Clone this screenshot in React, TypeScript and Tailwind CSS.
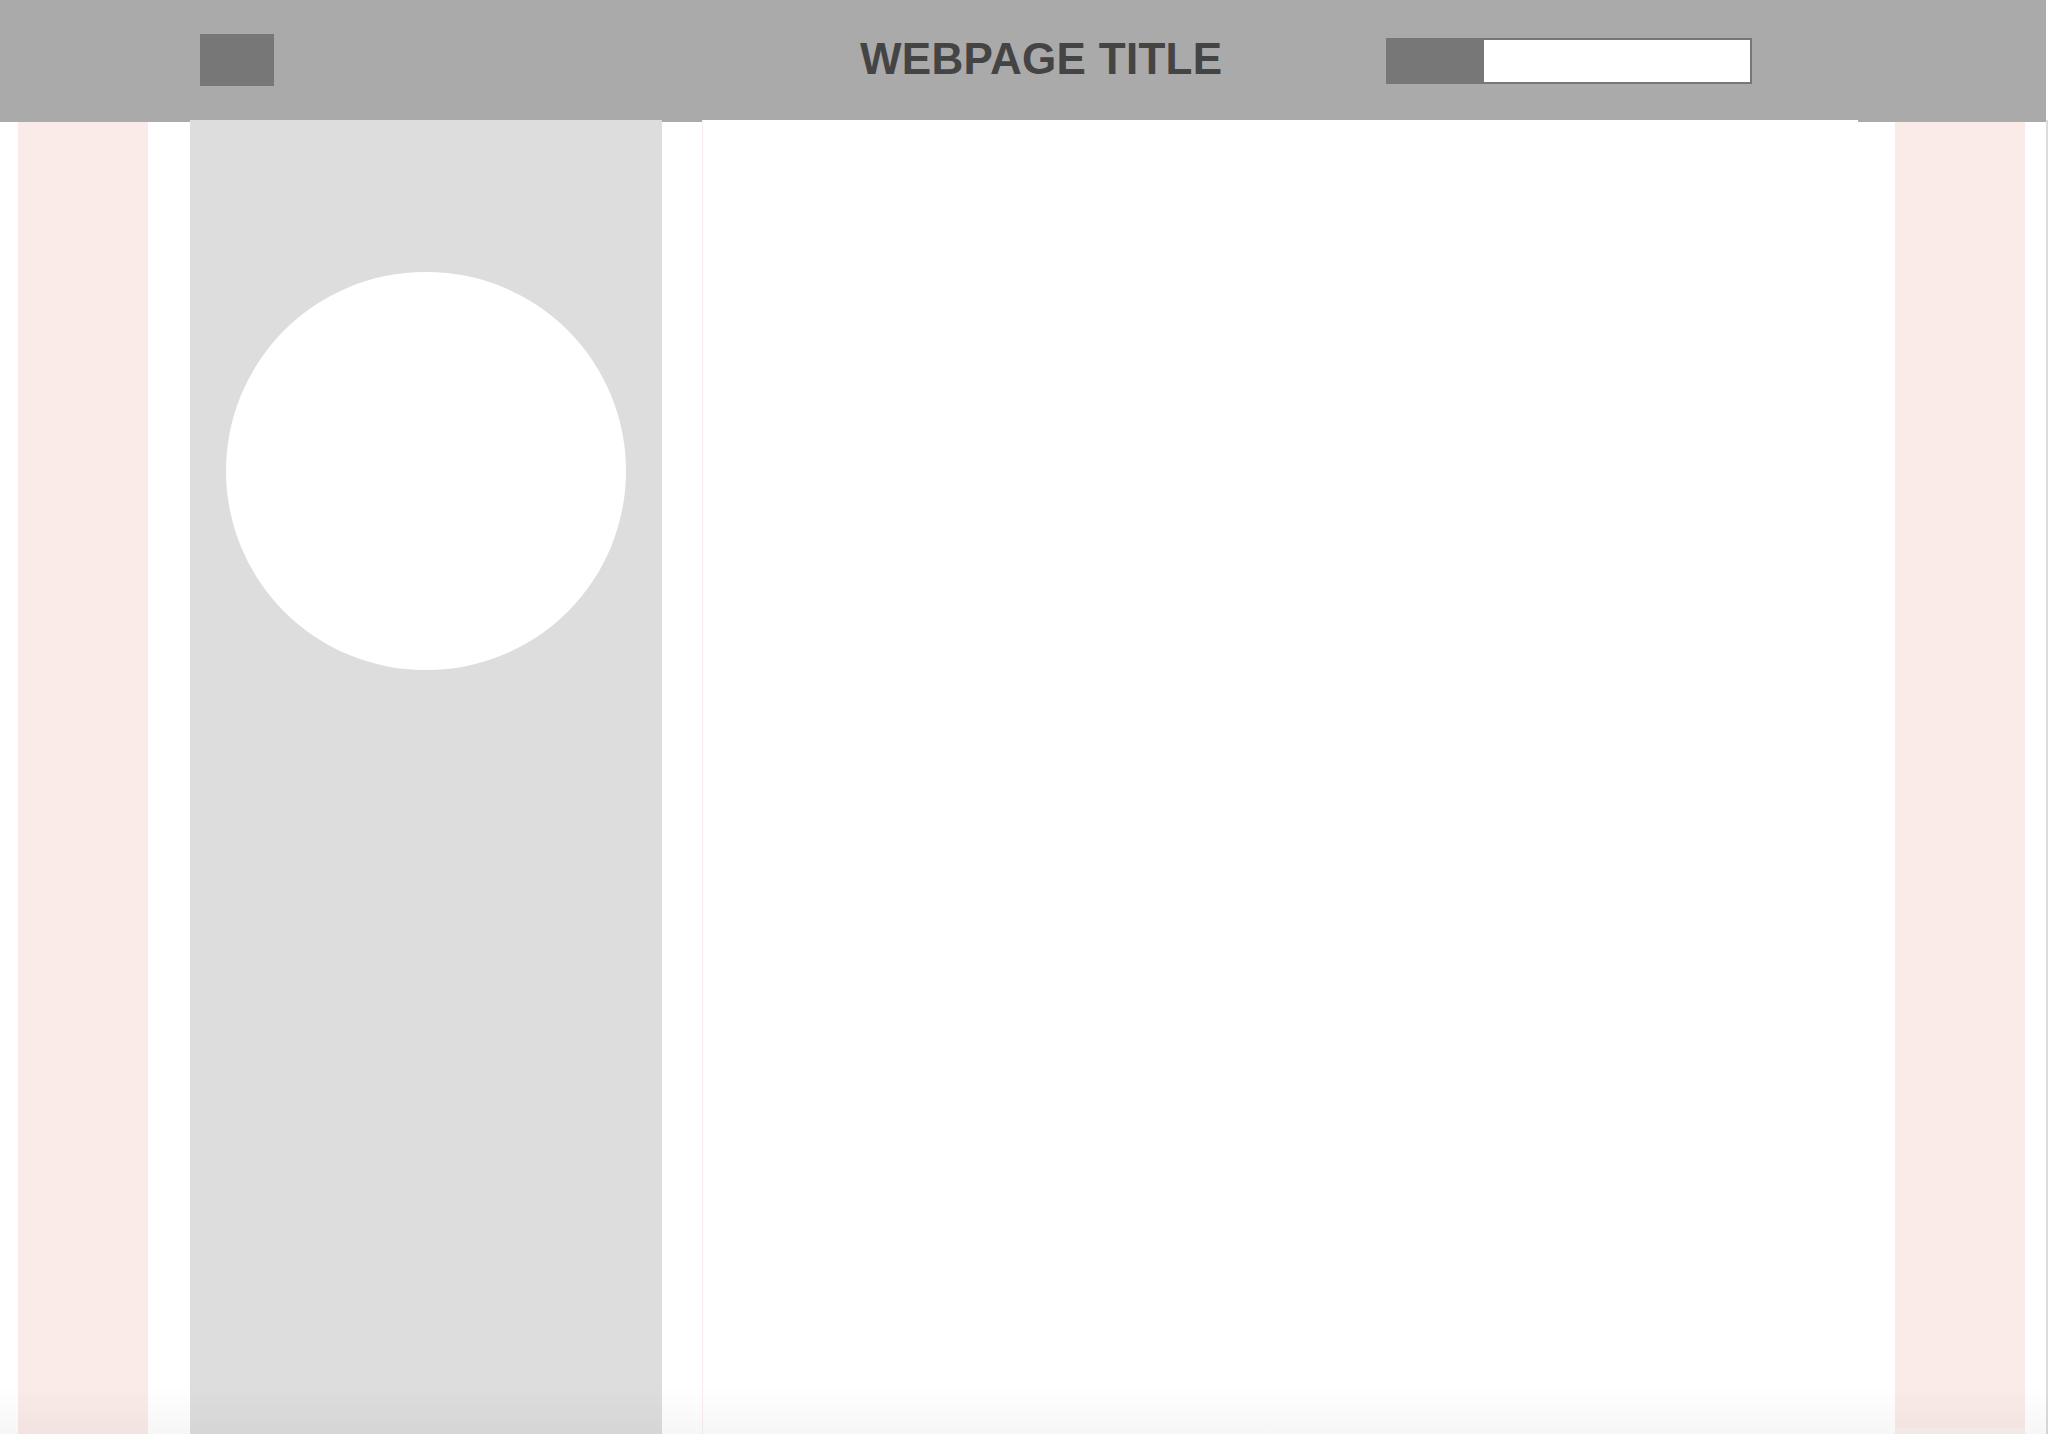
const App = () => {
  return (
    <div className="relative min-h-[1434px] w-[2048px] overflow-hidden bg-white font-['Liberation_Sans',Arial,sans-serif]">
      <div className="flex w-[2048px]">
        <div className="w-[2046px]">
          <header className="flex h-[122px] items-start bg-[#aaaaaa]">
            <div className="ml-[200px] mt-[34px] h-[52px] w-[74px] bg-[#777777]" />
            <h1 className="ml-[586px] mt-[37px] whitespace-nowrap text-[44px] font-bold leading-[44px] tracking-[0.3px] text-[#444444]">
              WEBPAGE TITLE
            </h1>
            <div className="ml-auto mr-[294px] mt-[38px] flex h-[46px] w-[366px]">
              <button type="button" className="h-full w-[98px] bg-[#777777]" />
              <input
                type="text"
                aria-label="Search"
                className="h-full flex-1 border-2 border-l-0 border-[#777777] bg-white outline-none"
              />
            </div>
          </header>

          <div className="flex items-start">
            <div className="ml-[18px] h-[1312px] w-[130px] bg-[#fbebe8]" />
            <aside className="relative z-10 ml-[42px] -mt-[2px] flex h-[1314px] w-[472px] justify-center bg-[#dddddd] pt-[152px]">
              <div className="h-[398px] w-[400px] rounded-full bg-white" />
            </aside>
            <main className="relative z-10 ml-[40px] -mt-[2px] h-[1314px] w-[1156px] border-l border-[#f8eeee] bg-white" />
            <div className="ml-[37px] flex w-[130px] flex-col">
              <div className="h-[1306px] bg-[#fbebe8]" />
              <div className="h-[6px] bg-[#f9f0ef]" />
            </div>
          </div>
        </div>
        <div className="mt-[120px] w-[2px] bg-[#dcdcdc]" />
      </div>
      <div className="pointer-events-none absolute bottom-0 left-0 z-20 h-[48px] w-full bg-gradient-to-b from-transparent to-black/[0.035]" />
    </div>
  );
};

export default App;
